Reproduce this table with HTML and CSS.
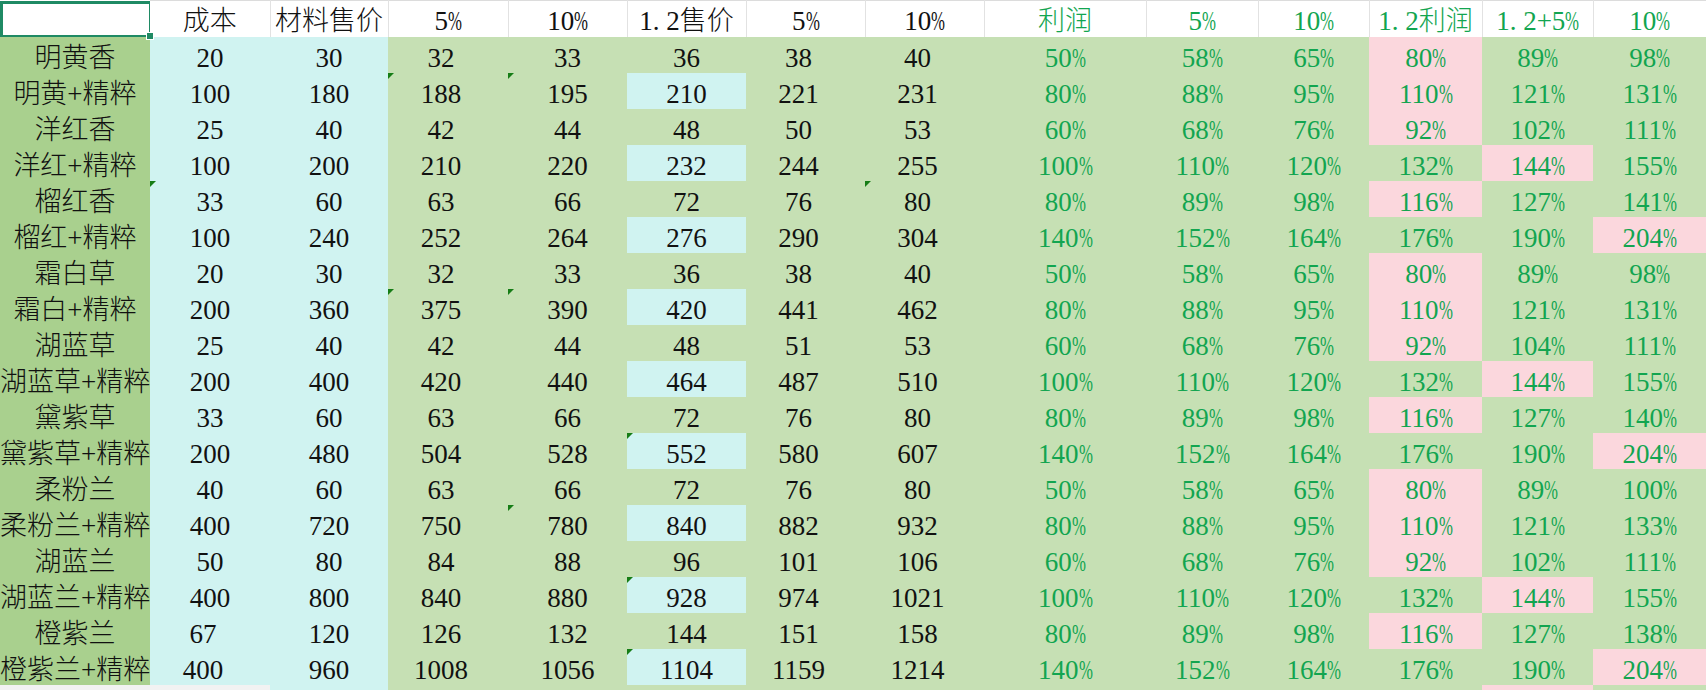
FILE: index.html
```html
<!DOCTYPE html>
<html lang="zh-CN">
<head>
<meta charset="utf-8">
<title>药剂价格表</title>
<link rel="stylesheet" href="styles.css">
</head>
<body>
<table class="sheet">
<colgroup>
<col class="w150"><col class="w120"><col class="w118"><col class="w120"><col class="w119"><col class="w119"><col class="w119"><col class="w119"><col class="w162"><col class="w112"><col class="w111"><col class="w113"><col class="w111"><col class="w113">
</colgroup>
<thead>
<tr>
<th class="sel"><span class="handle"></span></th><th>成本</th><th>材料售价</th><th>5<span class="pc">%</span></th><th>10<span class="pc">%</span></th><th>1<span class="dot">.</span>2售价</th><th>5<span class="pc">%</span></th><th>10<span class="pc">%</span></th><th class="g">利润</th><th class="g">5<span class="pc">%</span></th><th class="g">10<span class="pc">%</span></th><th class="g">1<span class="dot">.</span>2利润</th><th class="g">1<span class="dot">.</span>2+5<span class="pc">%</span></th><th class="g">10<span class="pc">%</span></th>
</tr>
</thead>
<tbody>
<tr><td class="a">明黄香</td><td class="c">20</td><td class="c">30</td><td class="s">32</td><td>33</td><td>36</td><td class="s">38</td><td class="s">40</td><td class="g">50<span class="pc">%</span></td><td class="g">58<span class="pc">%</span></td><td class="g">65<span class="pc">%</span></td><td class="g p">80<span class="pc">%</span></td><td class="g">89<span class="pc">%</span></td><td class="g">98<span class="pc">%</span></td></tr>
<tr><td class="a">明黄+精粹</td><td class="c">100</td><td class="c">180</td><td class="s e">188</td><td class="e">195</td><td class="c">210</td><td class="s">221</td><td class="s">231</td><td class="g">80<span class="pc">%</span></td><td class="g">88<span class="pc">%</span></td><td class="g">95<span class="pc">%</span></td><td class="g p">110<span class="pc">%</span></td><td class="g">121<span class="pc">%</span></td><td class="g">131<span class="pc">%</span></td></tr>
<tr><td class="a">洋红香</td><td class="c">25</td><td class="c">40</td><td class="s">42</td><td>44</td><td>48</td><td class="s">50</td><td class="s">53</td><td class="g">60<span class="pc">%</span></td><td class="g">68<span class="pc">%</span></td><td class="g">76<span class="pc">%</span></td><td class="g p">92<span class="pc">%</span></td><td class="g">102<span class="pc">%</span></td><td class="g">111<span class="pc">%</span></td></tr>
<tr><td class="a">洋红+精粹</td><td class="c">100</td><td class="c">200</td><td class="s">210</td><td>220</td><td class="c">232</td><td class="s">244</td><td class="s">255</td><td class="g">100<span class="pc">%</span></td><td class="g">110<span class="pc">%</span></td><td class="g">120<span class="pc">%</span></td><td class="g">132<span class="pc">%</span></td><td class="g p">144<span class="pc">%</span></td><td class="g">155<span class="pc">%</span></td></tr>
<tr><td class="a">榴红香</td><td class="c e">33</td><td class="c">60</td><td class="s">63</td><td>66</td><td>72</td><td class="s">76</td><td class="s e">80</td><td class="g">80<span class="pc">%</span></td><td class="g">89<span class="pc">%</span></td><td class="g">98<span class="pc">%</span></td><td class="g p">116<span class="pc">%</span></td><td class="g">127<span class="pc">%</span></td><td class="g">141<span class="pc">%</span></td></tr>
<tr><td class="a">榴红+精粹</td><td class="c">100</td><td class="c">240</td><td class="s">252</td><td>264</td><td class="c">276</td><td class="s">290</td><td class="s">304</td><td class="g">140<span class="pc">%</span></td><td class="g">152<span class="pc">%</span></td><td class="g">164<span class="pc">%</span></td><td class="g">176<span class="pc">%</span></td><td class="g">190<span class="pc">%</span></td><td class="g p">204<span class="pc">%</span></td></tr>
<tr><td class="a">霜白草</td><td class="c">20</td><td class="c">30</td><td class="s">32</td><td>33</td><td>36</td><td class="s">38</td><td class="s">40</td><td class="g">50<span class="pc">%</span></td><td class="g">58<span class="pc">%</span></td><td class="g">65<span class="pc">%</span></td><td class="g p">80<span class="pc">%</span></td><td class="g">89<span class="pc">%</span></td><td class="g">98<span class="pc">%</span></td></tr>
<tr><td class="a">霜白+精粹</td><td class="c">200</td><td class="c">360</td><td class="s e">375</td><td class="e">390</td><td class="c">420</td><td class="s">441</td><td class="s">462</td><td class="g">80<span class="pc">%</span></td><td class="g">88<span class="pc">%</span></td><td class="g">95<span class="pc">%</span></td><td class="g p">110<span class="pc">%</span></td><td class="g">121<span class="pc">%</span></td><td class="g">131<span class="pc">%</span></td></tr>
<tr><td class="a">湖蓝草</td><td class="c">25</td><td class="c">40</td><td class="s">42</td><td>44</td><td>48</td><td class="s">51</td><td class="s">53</td><td class="g">60<span class="pc">%</span></td><td class="g">68<span class="pc">%</span></td><td class="g">76<span class="pc">%</span></td><td class="g p">92<span class="pc">%</span></td><td class="g">104<span class="pc">%</span></td><td class="g">111<span class="pc">%</span></td></tr>
<tr><td class="a">湖蓝草+精粹</td><td class="c">200</td><td class="c">400</td><td class="s">420</td><td>440</td><td class="c">464</td><td class="s">487</td><td class="s">510</td><td class="g">100<span class="pc">%</span></td><td class="g">110<span class="pc">%</span></td><td class="g">120<span class="pc">%</span></td><td class="g">132<span class="pc">%</span></td><td class="g p">144<span class="pc">%</span></td><td class="g">155<span class="pc">%</span></td></tr>
<tr><td class="a">黛紫草</td><td class="c">33</td><td class="c">60</td><td class="s">63</td><td>66</td><td>72</td><td class="s">76</td><td class="s">80</td><td class="g">80<span class="pc">%</span></td><td class="g">89<span class="pc">%</span></td><td class="g">98<span class="pc">%</span></td><td class="g p">116<span class="pc">%</span></td><td class="g">127<span class="pc">%</span></td><td class="g">140<span class="pc">%</span></td></tr>
<tr><td class="a">黛紫草+精粹</td><td class="c">200</td><td class="c">480</td><td class="s">504</td><td>528</td><td class="c e">552</td><td class="s">580</td><td class="s">607</td><td class="g">140<span class="pc">%</span></td><td class="g">152<span class="pc">%</span></td><td class="g">164<span class="pc">%</span></td><td class="g">176<span class="pc">%</span></td><td class="g">190<span class="pc">%</span></td><td class="g p">204<span class="pc">%</span></td></tr>
<tr><td class="a">柔粉兰</td><td class="c">40</td><td class="c">60</td><td class="s">63</td><td>66</td><td>72</td><td class="s">76</td><td class="s">80</td><td class="g">50<span class="pc">%</span></td><td class="g">58<span class="pc">%</span></td><td class="g">65<span class="pc">%</span></td><td class="g p">80<span class="pc">%</span></td><td class="g">89<span class="pc">%</span></td><td class="g">100<span class="pc">%</span></td></tr>
<tr><td class="a">柔粉兰+精粹</td><td class="c">400</td><td class="c">720</td><td class="s">750</td><td class="e">780</td><td class="c">840</td><td class="s">882</td><td class="s">932</td><td class="g">80<span class="pc">%</span></td><td class="g">88<span class="pc">%</span></td><td class="g">95<span class="pc">%</span></td><td class="g p">110<span class="pc">%</span></td><td class="g">121<span class="pc">%</span></td><td class="g">133<span class="pc">%</span></td></tr>
<tr><td class="a">湖蓝兰</td><td class="c">50</td><td class="c">80</td><td class="s">84</td><td>88</td><td>96</td><td class="s">101</td><td class="s">106</td><td class="g">60<span class="pc">%</span></td><td class="g">68<span class="pc">%</span></td><td class="g">76<span class="pc">%</span></td><td class="g p">92<span class="pc">%</span></td><td class="g">102<span class="pc">%</span></td><td class="g">111<span class="pc">%</span></td></tr>
<tr><td class="a">湖蓝兰+精粹</td><td class="c">400</td><td class="c">800</td><td class="s">840</td><td>880</td><td class="c e">928</td><td class="s">974</td><td class="s">1021</td><td class="g">100<span class="pc">%</span></td><td class="g">110<span class="pc">%</span></td><td class="g">120<span class="pc">%</span></td><td class="g">132<span class="pc">%</span></td><td class="g p">144<span class="pc">%</span></td><td class="g">155<span class="pc">%</span></td></tr>
<tr><td class="a">橙紫兰</td><td class="c s">67</td><td class="c">120</td><td class="s">126</td><td>132</td><td>144</td><td class="s">151</td><td class="s">158</td><td class="g">80<span class="pc">%</span></td><td class="g">89<span class="pc">%</span></td><td class="g">98<span class="pc">%</span></td><td class="g p">116<span class="pc">%</span></td><td class="g">127<span class="pc">%</span></td><td class="g">138<span class="pc">%</span></td></tr>
<tr><td class="a">橙紫兰+精粹</td><td class="c s">400</td><td class="c">960</td><td class="s">1008</td><td>1056</td><td class="c e">1104</td><td class="s">1159</td><td class="s">1214</td><td class="g">140<span class="pc">%</span></td><td class="g">152<span class="pc">%</span></td><td class="g">164<span class="pc">%</span></td><td class="g">176<span class="pc">%</span></td><td class="g">190<span class="pc">%</span></td><td class="g p">204<span class="pc">%</span></td></tr>
<tr><td class="blank"></td><td class="blank"></td><td class="c"></td><td></td><td></td><td></td><td></td><td></td><td></td><td></td><td></td><td></td><td class="p"></td><td></td></tr>
</tbody>
</table>
</body>
</html>
```

FILE: styles.css
```css
html, body {
  margin: 0;
  padding: 0;
  background: #ffffff;
  overflow: hidden;
}

.sheet {
  table-layout: fixed;
  width: 1706px;
  border-collapse: collapse;
  border-spacing: 0;
  font-family: "Liberation Serif", "Noto Sans CJK SC", serif;
  font-size: 27px;
  font-weight: 300;
  color: #111111;
}

.w150 { width: 150px; }
.w120 { width: 120px; }
.w118 { width: 118px; }
.w119 { width: 119px; }
.w162 { width: 162px; }
.w112 { width: 112px; }
.w111 { width: 111px; }
.w113 { width: 113px; }

.sheet tr {
  height: 36px;
}

.sheet th,
.sheet td {
  height: 36px;
  box-sizing: border-box;
  padding: 6px 0 0 0;
  line-height: 30px;
  vertical-align: top;
  text-align: center;
  white-space: nowrap;
  font-weight: 300;
  position: relative;
}

.sheet th {
  background: #ffffff;
  border-top: 1px solid #dcdcdc;
  border-right: 1px solid #e2e2e2;
  padding-top: 5px;
}

.sheet th.sel {
  border: none;
  padding: 0;
}

.sheet th.sel::before {
  content: "";
  position: absolute;
  left: 0;
  top: 0;
  right: -2px;
  bottom: -1px;
  border: 3px solid #1f8a64;
}

.handle {
  position: absolute;
  right: -4px;
  bottom: -3px;
  width: 6px;
  height: 6px;
  background: #1f8a64;
  border: 1px solid #ffffff;
  z-index: 2;
}

.sheet td {
  background: #c6e0b4;
}

.sheet td.a {
  background: #a9d08e;
  overflow: visible;
}

.sheet td.c {
  background: #d0f3f1;
}

.sheet td.p {
  background: #fbd7dd;
}

.sheet td.blank {
  background: #f2f2f2;
}

.g {
  color: #12a550;
}

.s {
  padding-right: 14px !important;
}

.e::before {
  content: "";
  position: absolute;
  left: 0;
  top: 0;
  width: 0;
  height: 0;
  border-top: 6px solid #167d16;
  border-right: 6px solid transparent;
}

.pc {
  display: inline-block;
  width: 0.5em;
  transform: scaleX(0.62);
  transform-origin: 0 50%;
}

.dot {
  display: inline-block;
  width: 0.5em;
  text-align: left;
}
```
